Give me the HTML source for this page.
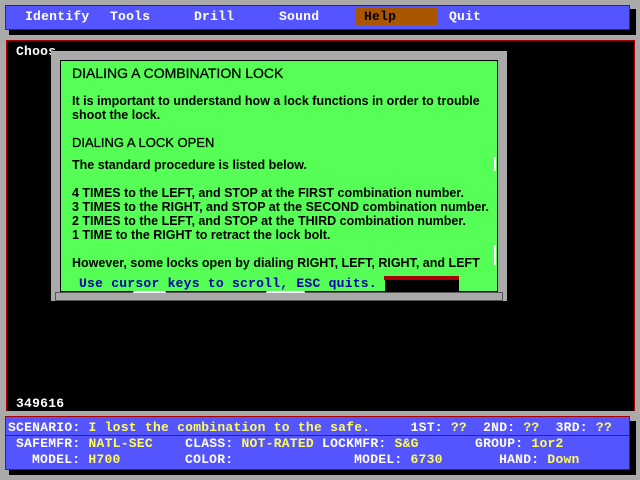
<!DOCTYPE html>
<html><head><style>
*{margin:0;padding:0;box-sizing:border-box}
body{width:640px;height:480px;background:#aaaaaa;position:relative;overflow:hidden;font-family:"Liberation Mono",monospace;font-weight:bold;font-size:13px}
.a{position:absolute}
.mono{font-family:"Liberation Mono",monospace;font-weight:bold;font-size:13px;white-space:pre;line-height:14px;letter-spacing:0.25px}
.w{color:#fff}.y{color:#ffff55}
.sans{font-family:"Liberation Sans",sans-serif;font-weight:bold;font-size:12.5px;color:#000;white-space:pre;line-height:14px}
</style></head><body>
<div class="a" style="left:9px;top:9px;width:627px;height:26px;background:#000"></div>
<div class="a" style="left:5px;top:5px;width:625px;height:25px;background:#5555ff;border:1px solid #aa0000"></div>
<div class="a" style="left:356px;top:8px;width:81px;height:17px;background:#aa5500"></div>
<div class="a mono w" style="left:25px;top:10px">Identify</div>
<div class="a mono w" style="left:110px;top:10px">Tools</div>
<div class="a mono w" style="left:194px;top:10px">Drill</div>
<div class="a mono w" style="left:279px;top:10px">Sound</div>
<div class="a mono" style="left:364px;top:10px;color:#000">Help</div>
<div class="a mono w" style="left:449px;top:10px">Quit</div>

<div class="a" style="left:6px;top:40px;width:629px;height:371px;background:#000;border:1px solid #aa0000;border-bottom:none"></div>
<div class="a mono w" style="left:16px;top:45px">Choos</div>
<div class="a mono w" style="left:16px;top:397px">349616</div>

<div class="a" style="left:51px;top:51px;width:456px;height:250px;background:#aaaaaa"></div>
<div class="a" style="left:60px;top:60px;width:438px;height:232px;background:#55ff55;border:1px solid #000"></div>
<div class="a" style="left:55px;top:292px;width:448px;height:9px;background:#aaaaaa;border:1px solid #555"></div>
<div class="a" style="left:133px;top:290px;width:33px;height:3px;background:#fff;border-radius:3px 3px 0 0"></div>
<div class="a" style="left:266px;top:290px;width:39px;height:3px;background:#fff;border-radius:3px 3px 0 0"></div>
<div class="a" style="left:494px;top:157px;width:2px;height:14px;background:#fff"></div>
<div class="a" style="left:494px;top:245px;width:2px;height:20px;background:#fff"></div>
<div class="a sans" style="left:72px;top:66px;font-weight:normal;font-size:14px;-webkit-text-stroke:0.3px #000">DIALING A COMBINATION LOCK</div>
<div class="a sans" style="left:72px;top:94px">It is important to understand how a lock functions in order to trouble
shoot the lock.</div>
<div class="a sans" style="left:72px;top:136px;font-weight:normal;font-size:13px;-webkit-text-stroke:0.3px #000">DIALING A LOCK OPEN</div>
<div class="a sans" style="left:72px;top:158px">The standard procedure is listed below.</div>
<div class="a sans" style="left:72px;top:186px">4 TIMES to the LEFT, and STOP at the FIRST combination number.
3 TIMES to the RIGHT, and STOP at the SECOND combination number.
2 TIMES to the LEFT, and STOP at the THIRD combination number.
1 TIME to the RIGHT to retract the lock bolt.</div>
<div class="a sans" style="left:72px;top:256px">However, some locks open by dialing RIGHT, LEFT, RIGHT, and LEFT</div>
<div class="a" style="left:61px;top:272px;width:436px;height:19px;background:#55ff55"></div>
<div class="a mono" style="left:79px;top:277px;color:#0000aa">Use cursor keys to scroll, ESC quits.</div>
<div class="a" style="left:385px;top:276px;width:74px;height:16px;background:#000"></div>
<div class="a" style="left:384px;top:276px;width:75px;height:4px;background:#aa0000"></div>

<div class="a" style="left:9px;top:421px;width:627px;height:54px;background:#000"></div>
<div class="a" style="left:5px;top:416px;width:625px;height:54px;background:#5555ff;border:1px solid #aa0000"></div>
<div class="a" style="left:6px;top:435px;width:623px;height:1px;background:#aa0000"></div>
<div class="a mono" style="left:8px;top:421px"><span class="w">SCENARIO:</span> <span class="y">I lost the combination to the safe.</span>     <span class="w">1ST:</span> <span class="y">??</span>  <span class="w">2ND:</span> <span class="y">??</span>  <span class="w">3RD:</span> <span class="y">??</span></div>
<div class="a mono" style="left:16px;top:437px"><span class="w">SAFEMFR:</span> <span class="y">NATL-SEC</span>    <span class="w">CLASS:</span> <span class="y">NOT-RATED</span> <span class="w">LOCKMFR:</span> <span class="y">S&amp;G</span>       <span class="w">GROUP:</span> <span class="y">1or2</span></div>
<div class="a mono" style="left:32px;top:453px"><span class="w">MODEL:</span> <span class="y">H700</span>        <span class="w">COLOR:</span>               <span class="w">MODEL:</span> <span class="y">6730</span>       <span class="w">HAND:</span> <span class="y">Down</span></div>
</body></html>
